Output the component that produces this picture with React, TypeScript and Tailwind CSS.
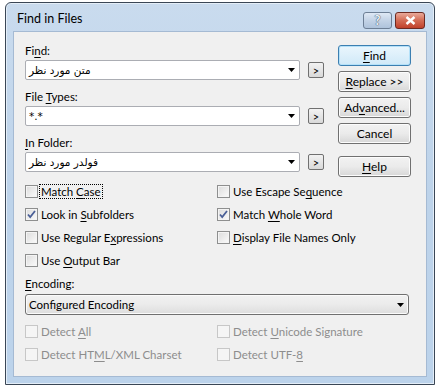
import React from 'react';

const ui = { fontFamily: 'Lato, "Noto Sans", sans-serif' };
const dejavu = { fontFamily: '"DejaVu Sans", sans-serif' };

// text with an underlined mnemonic letter
const Mn = ({ pre, k, post }: { pre?: string; k: string; post?: string }) => (
  <span>
    {pre}
    <span className="underline underline-offset-2">{k}</span>
    {post}
  </span>
);

const Arrow = () => (
  <svg width="7" height="4" viewBox="0 0 7 4" className="shrink-0">
    <path d="M0 0h7L3.5 4z" fill="#000" />
  </svg>
);

const Combo = ({ children, rtl }: { children: React.ReactNode; rtl?: boolean }) => (
  <div className="flex items-center gap-2">
    <div className="flex h-5 w-[275px] items-center justify-between rounded-[2px] border border-[#abadb3] bg-white pl-[3px] pr-[4px]">
      <span dir={rtl ? 'rtl' : 'ltr'} className="text-[10.5px] leading-none text-black" style={dejavu}>
        {children}
      </span>
      <Arrow />
    </div>
    <div className="flex h-[16px] w-[16px] items-center justify-center rounded-[2px] border border-[#707070] bg-gradient-to-b from-[#f2f2f2] to-[#d9d9d9] text-[11px] leading-none text-black">
      &gt;
    </div>
  </div>
);

const Btn = ({ children, primary, className = '' }: { children: React.ReactNode; primary?: boolean; className?: string }) => (
  <div
    className={`flex h-[21px] w-[73px] items-center justify-center rounded-[3px] border text-[12px] leading-none text-black ${
      primary
        ? 'border-[#3c7fb1] bg-gradient-to-b from-[#eaf6fd] to-[#d0e9f8] shadow-[inset_0_0_0_1px_#b4e1f9]'
        : 'border-[#707070] bg-gradient-to-b from-[#f2f2f2] via-[#ebebeb] to-[#d7d7d7] shadow-[inset_0_0_0_1px_#fcfcfc]'
    } ${className}`}
  >
    {children}
  </div>
);

const Check = ({ label, checked, disabled, focus }: { label: React.ReactNode; checked?: boolean; disabled?: boolean; focus?: boolean }) => (
  <div className={`flex h-[23px] items-center gap-[2px] text-[11.5px] leading-none ${disabled ? 'text-[#8d8d8d]' : 'text-black'}`}>
    <div
      className={`relative flex h-[13px] w-[13px] shrink-0 items-center justify-center border ${
        disabled ? 'border-[#c7c7c7] bg-[#f5f5f5]' : 'border-[#8e8f8f] bg-gradient-to-br from-[#dcdcdc] to-[#fbfbfb] shadow-[inset_0_0_0_1px_#f4f4f4]'
      }`}
    >
      {checked && (
        <svg width="9" height="9" viewBox="0 0 9 9">
          <path d="M1 4.5l2.2 2.5L8 1" stroke="#4a5f97" strokeWidth="1.8" fill="none" />
        </svg>
      )}
    </div>
    <span className={focus ? 'outline outline-1 outline-dotted outline-black px-[1px] py-[1px]' : 'px-[1px]'}>{label}</span>
  </div>
);

export default function App() {
  return (
    <div className="h-[389px] w-[441px] bg-white pl-[5px] pt-[2px]" style={ui}>
      <div className="flex h-[383px] w-[430px] flex-col rounded-t-[6px] border border-[#3a4756] bg-gradient-to-b from-[#c9dbee] via-[#bdd3ea] to-[#bcd3eb] px-[7px] pb-[7px] shadow-[inset_0_0_0_1px_#e4eef8]">
        {/* Title bar */}
        <div className="flex h-[28px] shrink-0 items-start justify-between">
          <span className="pl-[4px] pt-[10px] text-[12.5px] leading-none text-black">Find in Files</span>
          <div className="flex gap-[3px] pr-[2px] pt-[9px]">
            <div
              className="flex h-[17px] w-[29px] items-center justify-center rounded-[3px] border border-[#6d7f95] bg-gradient-to-b from-[#dfe9f5] via-[#c3d3e6] to-[#aec3db] text-[13px] font-bold leading-none text-[#eef3f9] [text-shadow:0_0_1px_#33465e,0_0_1px_#33465e]"
            >
              ?
            </div>
            <div className="flex h-[17px] w-[30px] items-center justify-center rounded-[3px] border border-[#6c2a22] bg-gradient-to-b from-[#e9a99a] via-[#d36b54] to-[#c0402a]">
              <svg width="11" height="9" viewBox="0 0 11 9">
                <path d="M1.5 1l8 7M9.5 1l-8 7" stroke="#fff" strokeWidth="2.4" />
              </svg>
            </div>
          </div>
        </div>

        {/* Client area */}
        <div className="flex flex-1 flex-col border border-[#a5bad3] bg-[#f0f0f0] pl-[11px] pt-[11px]">
          <div className="flex">
            <div className="flex w-[313px] flex-col gap-[9px] text-[11.5px]">
              <div className="flex flex-col gap-[1px]">
                <div className="h-4 leading-4"><Mn pre="Fi" k="n" post="d:" /></div>
                <Combo rtl>متن مورد نظر</Combo>
              </div>
              <div className="flex flex-col gap-[1px]">
                <div className="h-4 leading-4"><Mn pre="File " k="T" post="ypes:" /></div>
                <Combo>*.*</Combo>
              </div>
              <div className="flex flex-col gap-[1px]">
                <div className="h-4 leading-4"><Mn k="I" post="n Folder:" /></div>
                <Combo rtl>فولدر مورد نظر</Combo>
              </div>
            </div>
            <div className="mt-[2px] flex flex-col gap-[5px]">
              <Btn primary><Mn k="F" post="ind" /></Btn>
              <Btn><Mn k="R" post="eplace >>" /></Btn>
              <Btn><Mn pre="Ad" k="v" post="anced..." /></Btn>
              <Btn>Cancel</Btn>
              <Btn className="mt-[7px]"><Mn k="H" post="elp" /></Btn>
            </div>
          </div>

          <div className="mt-[3px] grid grid-cols-[192px_1fr]">
            <Check focus label={<Mn pre="Match " k="C" post="ase" />} />
            <Check label={<Mn pre="Use Escape Se" k="q" post="uence" />} />
            <Check checked label={<Mn pre="Look in " k="S" post="ubfolders" />} />
            <Check checked label={<Mn pre="Match " k="W" post="hole Word" />} />
            <Check label={<Mn pre="Use Regular E" k="x" post="pressions" />} />
            <Check label={<Mn k="D" post="isplay File Names Only" />} />
            <Check label={<Mn pre="Use " k="O" post="utput Bar" />} />
          </div>

          <div className="mt-[4px] h-4 text-[11.5px] leading-4"><Mn k="E" post="ncoding:" /></div>
          <div className="mt-[2px] flex h-[21px] w-[384px] items-center justify-between rounded-[3px] border border-[#707070] bg-gradient-to-b from-[#f2f2f2] via-[#ebebeb] to-[#dddddd] pl-[3px] pr-[4px] shadow-[inset_0_0_0_1px_#fbfbfb]">
            <span className="text-[11.5px] leading-none text-black">Configured Encoding</span>
            <Arrow />
          </div>

          <div className="mt-[5px] grid grid-cols-[192px_1fr]">
            <Check disabled label={<Mn pre="Detect " k="A" post="ll" />} />
            <Check disabled label={<Mn pre="Detect " k="U" post="nicode Signature" />} />
            <Check disabled label={<Mn pre="Detect HT" k="M" post="L/XML Charset" />} />
            <Check disabled label={<Mn pre="Detect UTF-" k="8" />} />
          </div>
        </div>
      </div>
    </div>
  );
}
